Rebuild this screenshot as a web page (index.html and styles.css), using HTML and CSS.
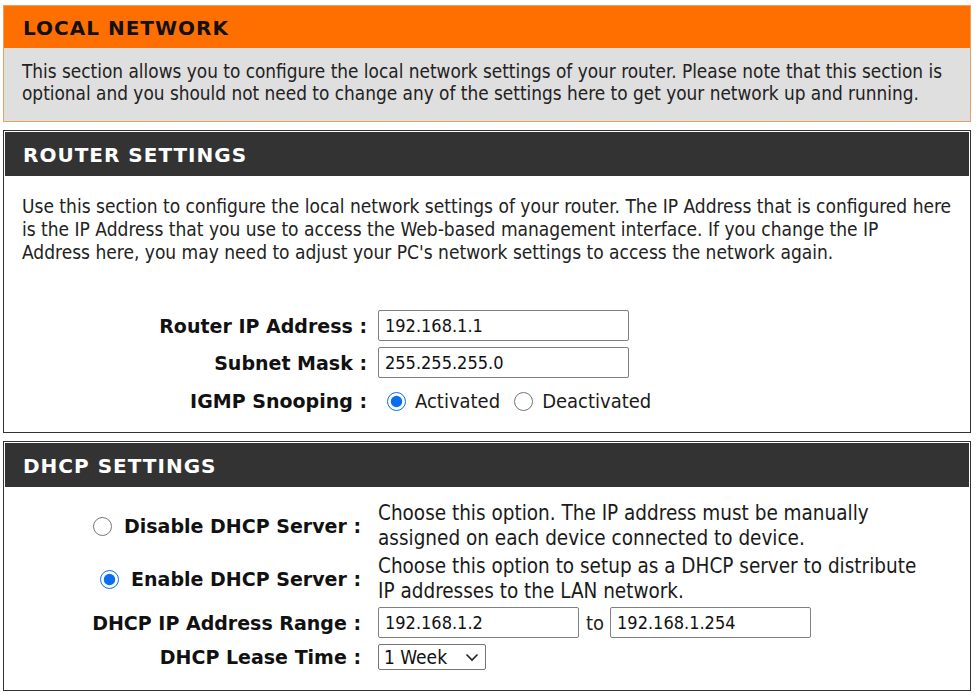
FILE: index.html
```html
<!DOCTYPE html>
<html lang="en">
<head>
    <meta charset="UTF-8">
    <link rel="stylesheet" href="styles.css">
    <title>Local Network</title>
</head>
<body>
    <div class="page">
        <div class="box box-intro">
            <div class="box-head">LOCAL NETWORK</div>
            <div class="box-body">
                <p>This section allows you to configure the local network settings of your router. Please note that this section is optional and you should not need to change any of the settings here to get your network up and running.</p>
            </div>
        </div>

        <div class="box">
            <div class="box-head">ROUTER SETTINGS</div>
            <div class="box-body">
                <p>Use this section to configure the local network settings of your router. The IP Address that is configured here is the IP Address that you use to access the Web-based management interface. If you change the IP<br>Address here, you may need to adjust your PC's network settings to access the network again.</p>
                <div class="form form-router">
                    <label class="form-label" for="lan-ip">Router IP Address :</label>
                    <div class="form-field"><input type="text" id="lan-ip" class="text-input" value="192.168.1.1"></div>

                    <label class="form-label" for="lan-mask">Subnet Mask :</label>
                    <div class="form-field"><input type="text" id="lan-mask" class="text-input" value="255.255.255.0"></div>

                    <div class="form-label">IGMP Snooping :</div>
                    <div class="form-field radio-group">
                        <label class="radio-opt"><input type="radio" name="igmp" checked> Activated</label>
                        <label class="radio-opt"><input type="radio" name="igmp"> Deactivated</label>
                    </div>
                </div>
            </div>
        </div>

        <div class="box">
            <div class="box-head">DHCP SETTINGS</div>
            <div class="box-body box-body-dhcp">
                <div class="form form-dhcp">
                    <label class="form-label dhcp-choice"><input type="radio" name="dhcp"> Disable DHCP Server :</label>
                    <div class="form-desc">Choose this option. The IP address must be manually<br>assigned on each device connected to device.</div>

                    <label class="form-label dhcp-choice choice-on"><input type="radio" name="dhcp" checked> Enable DHCP Server :</label>
                    <div class="form-desc">Choose this option to setup as a DHCP server to distribute<br>IP addresses to the LAN network.</div>

                    <div class="form-label">DHCP IP Address Range :</div>
                    <div class="form-field">
                        <input type="text" class="text-input short" value="192.168.1.2">
                        <span class="range-to">to</span>
                        <input type="text" class="text-input short" value="192.168.1.254">
                    </div>

                    <label class="form-label lease-label" for="lease">DHCP Lease Time :</label>
                    <div class="form-field lease-field">
                        <span class="select-wrap">
                            <select id="lease" class="lease-select">
                                <option>1 Hour</option>
                                <option>1 Day</option>
                                <option selected>1 Week</option>
                            </select>
                            <svg class="select-arrow" width="14" height="9" viewBox="0 0 14 9"><path d="M1.5 1.5 L7 7 L12.5 1.5" fill="none" stroke="#222" stroke-width="1.6"/></svg>
                        </span>
                    </div>
                </div>
            </div>
        </div>
    </div>
</body>
</html>
```

FILE: styles.css
```css
* {
    box-sizing: border-box;
}

body {
    margin: 0;
    background-color: #fff;
    font-family: "DejaVu Sans Condensed", "DejaVu Sans", sans-serif;
    font-size: 19px;
    color: #222;
}

.page {
    width: 968px;
    margin: 5px 0 0 3px;
}

.box {
    border: 1px solid #333;
    padding: 1px;
    margin-bottom: 8px;
}

.box-head {
    background-color: #333;
    color: #fff;
    font-family: "DejaVu Sans", sans-serif;
    font-weight: bold;
    font-size: 20px;
    letter-spacing: 1px;
    height: 44px;
    line-height: 47px;
    padding-left: 18px;
}

.box-body {
    padding: 19px 17px 13px 17px;
}

.box-body p {
    margin: 0;
    line-height: 23px;
}

/* orange intro box */
.box-intro {
    border: 1px solid #e7a263;
    padding: 0;
}

.box-intro .box-head {
    background-color: #ff6f00;
    color: #111;
    height: 42px;
    line-height: 45px;
    padding-left: 19px;
}

.box-intro .box-body {
    background-color: #dfdfdf;
    padding: 13px 17px 16px 18px;
}

.box-intro .box-body p {
    font-size: 18.85px;
    line-height: 22px;
}

/* form grid */
.form {
    display: grid;
    grid-template-columns: 345px 1fr;
    column-gap: 11px;
    row-gap: 6px;
    align-items: center;
}

.form-router {
    margin-top: 46px;
}

.box-body-dhcp {
    padding-top: 14px;
    padding-bottom: 19px;
}

.form-dhcp {
    grid-template-columns: 339px 1fr;
    column-gap: 17px;
    row-gap: 3px;
}

.form-label {
    text-align: right;
    font-family: "DejaVu Sans", sans-serif;
    font-weight: bold;
    font-size: 19px;
    color: #111;
    white-space: nowrap;
}

.form-field {
    display: flex;
    align-items: center;
}

.text-input {
    width: 251px;
    height: 31px;
    border: 1px solid #808080;
    border-radius: 2px;
    padding: 0 6px;
    font-family: inherit;
    font-size: 18px;
    color: #111;
}

.text-input.short {
    width: 201px;
}

.range-to {
    margin: 0 6px 0 7px;
    font-size: 20px;
}

.radio-group {
    height: 34px;
    gap: 14px;
    padding-left: 9px;
}

.radio-opt {
    display: flex;
    align-items: center;
    gap: 9px;
    font-size: 20px;
    color: #1a1a1a;
}

input[type="radio"] {
    width: 19px;
    height: 19px;
    margin: 0;
    accent-color: #0a6ef0;
}

.dhcp-choice {
    display: flex;
    justify-content: flex-end;
    align-items: center;
    gap: 12px;
}

.choice-on {
    gap: 12px;
}

.form-desc {
    line-height: 25px;
    font-size: 20.5px;
    color: #1a1a1a;
}

.lease-label,
.lease-field {
    margin-top: 3px;
}

.select-wrap {
    position: relative;
    display: inline-block;
}

.lease-select {
    appearance: none;
    height: 26px;
    width: 108px;
    border: 1px solid #767676;
    border-radius: 2px;
    background-color: #fff;
    font-family: inherit;
    font-size: 19px;
    color: #111;
    padding: 0 0 0 5px;
}

.select-arrow {
    position: absolute;
    right: 7px;
    top: 9px;
    pointer-events: none;
}
```
